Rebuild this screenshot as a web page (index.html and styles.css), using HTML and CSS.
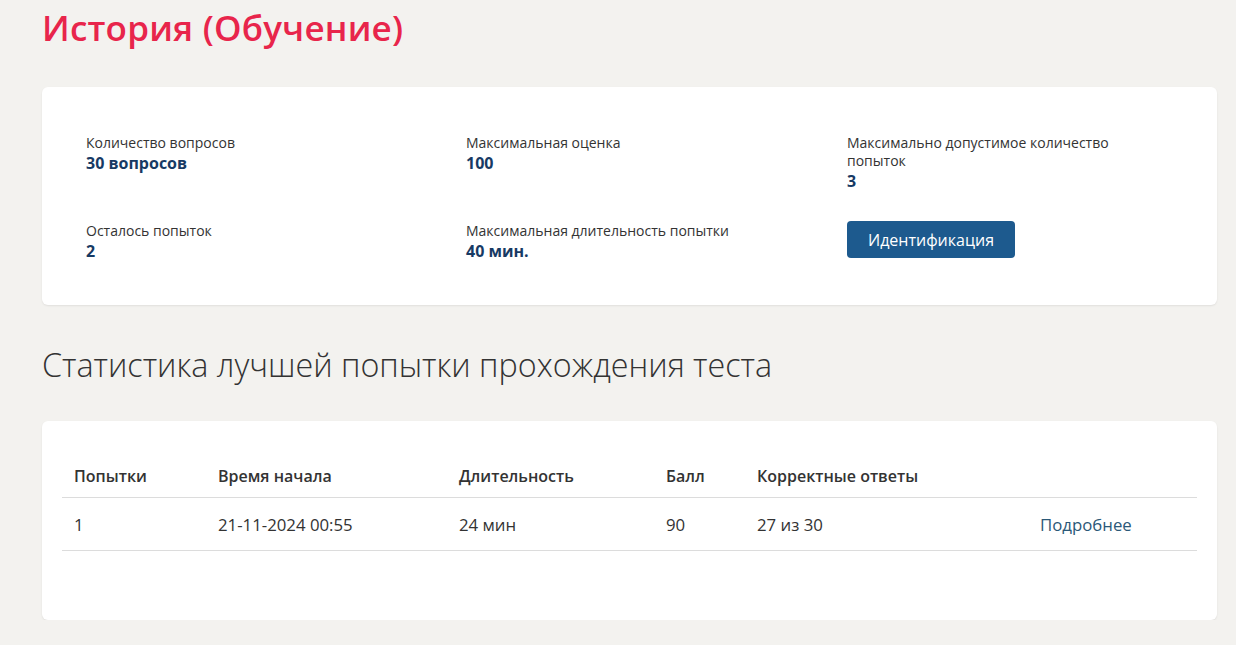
FILE: index.html
```html
<!DOCTYPE html>
<html lang="ru">
<head>
<meta charset="utf-8">
<title>История (Обучение)</title>
<link rel="stylesheet" href="styles.css">
</head>
<body>
<main class="page">
  <h1 class="page-title">История (Обучение)</h1>

  <section class="card info-card">
    <div class="info-grid">
      <div class="info-item">
        <div class="info-label">Количество вопросов</div>
        <div class="info-value">30 вопросов</div>
      </div>
      <div class="info-item">
        <div class="info-label">Максимальная оценка</div>
        <div class="info-value">100</div>
      </div>
      <div class="info-item">
        <div class="info-label">Максимально допустимое количество попыток</div>
        <div class="info-value">3</div>
      </div>
      <div class="info-item">
        <div class="info-label">Осталось попыток</div>
        <div class="info-value">2</div>
      </div>
      <div class="info-item">
        <div class="info-label">Максимальная длительность попытки</div>
        <div class="info-value">40 мин.</div>
      </div>
      <div class="info-item">
        <button class="btn-primary" type="button">Идентификация</button>
      </div>
    </div>
  </section>

  <h2 class="section-title">Статистика лучшей попытки прохождения теста</h2>

  <section class="card table-card">
    <table class="stats-table">
      <thead>
        <tr>
          <th class="col-try">Попытки</th>
          <th class="col-start">Время начала</th>
          <th class="col-dur">Длительность</th>
          <th class="col-score">Балл</th>
          <th class="col-correct">Корректные ответы</th>
          <th class="col-more"></th>
        </tr>
      </thead>
      <tbody>
        <tr>
          <td>1</td>
          <td>21-11-2024 00:55</td>
          <td>24 мин</td>
          <td>90</td>
          <td>27 из 30</td>
          <td><a class="more-link" href="#">Подробнее</a></td>
        </tr>
      </tbody>
    </table>
  </section>
</main>
</body>
</html>
```
FILE: styles.css
```css
* { box-sizing: border-box; }
html, body { margin: 0; padding: 0; }
body {
  background: #f3f2ef;
  font-family: "Open Sans", "Noto Sans", sans-serif;
  color: #333333;
}
.page {
  padding: 0 19px 0 42px;
}
.page-title {
  margin: 0;
  padding-top: 6px;
  height: 87px;
  font-size: 35px;
  font-weight: 600;
  line-height: 44px;
  color: #e8254b;
  letter-spacing: 0.2px;
}
.card {
  background: #ffffff;
  border-radius: 6px;
  box-shadow: 0 1px 2px rgba(0,0,0,0.08);
}
.info-card {
  padding: 47px 44px 40px 44px;
  height: 218px;
}
.info-grid {
  display: grid;
  grid-template-columns: 380px 381px 300px;
  row-gap: 30px;
}
.info-label {
  font-size: 14px;
  line-height: 18px;
  color: #333333;
}
.info-value {
  font-size: 16px;
  font-weight: 700;
  line-height: 22px;
  color: #173a64;
}
.btn-primary {
  width: 168px;
  height: 37px;
  border: 0;
  border-radius: 4px;
  background: #1d5a8e;
  color: #ffffff;
  font-family: inherit;
  font-size: 16px;
  padding: 0;
  margin-top: -1px;
}
.section-title {
  margin: 0;
  padding-top: 39px;
  height: 116px;
  font-size: 32.3px;
  font-weight: 300;
  line-height: 40px;
  color: #333333;
}
.table-card {
  padding: 44px 20px 68px 20px;
  height: 199px;
}
.stats-table {
  width: 100%;
  border-collapse: collapse;
  font-size: 16px;
}
.stats-table th {
  text-align: left;
  font-weight: 600;
  padding: 0 12px 10px 12px;
  line-height: 22px;
  border-bottom: 1px solid #dcdcdc;
  color: #333333;
}
.stats-table td {
  padding: 16px 12px 14px 12px;
  font-size: 16.8px;
  line-height: 22px;
  border-bottom: 1px solid #dcdcdc;
  color: #333333;
}
.col-try { width: 144px; }
.col-start { width: 241px; }
.col-dur { width: 207px; }
.col-score { width: 91px; }
.col-correct { width: 283px; }
.more-link {
  color: #2b5878;
  text-decoration: none;
}
```
